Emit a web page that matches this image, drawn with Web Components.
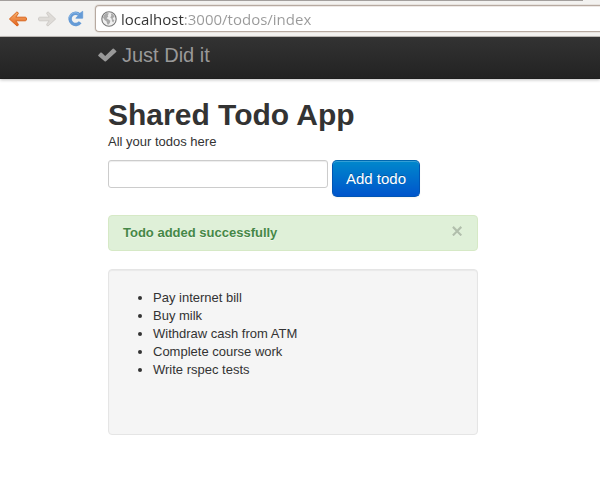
<!DOCTYPE html>
<html lang="en">
<head>
<meta charset="utf-8">
<title>Just Did it</title>
<style>
body { margin: 0; background: #fff; color: #333; font: 13px/18px "Liberation Sans", Arial, sans-serif; }
</style>
</head>
<body>
<browser-toolbar url="localhost:3000/todos/index"></browser-toolbar>
<site-nav>Just Did it</site-nav>
<todo-page>
  <page-heading slot="header">Shared Todo App<span slot="lead">All your todos here</span></page-heading>
  <todo-form slot="form">Add todo</todo-form>
  <flash-alert slot="alert">Todo added successfully</flash-alert>
  <todo-list></todo-list>
</todo-page>
<script>
function define(name, html, setup) {
  customElements.define(name, class extends HTMLElement {
    connectedCallback() {
      if (this.shadowRoot) return;
      const root = this.attachShadow({ mode: "open" });
      const template = document.createElement("template");
      template.innerHTML = html;
      root.append(template.content.cloneNode(true));
      if (setup) setup(this, root);
    }
  });
}

define("browser-toolbar", `
<style>
:host { display: block; background: #f3f2f0; border-bottom: 1px solid #c3bfbb; }
.edge { height: 1px; margin-right: 17px; background: #a39f9d; }
.bar { display: flex; align-items: center; height: 35px; }
.nav { display: flex; gap: 9px; padding-left: 8px; }
button { display: block; padding: 0; border: 0; background: none; width: 20px; height: 20px; }
svg { display: block; }
.address { flex: 1; display: flex; align-items: center; gap: 4px; box-sizing: border-box; height: 27px; margin: 0 0 0 9px; padding-left: 5px; background: #fff; border: 1px solid #b7aaa1; border-right: 0; border-radius: 4px 0 0 4px; box-shadow: inset 0 1px 0 #eee9e6, 0 0 0 1px #e7e3df; }
input { flex: 1; min-width: 0; margin: 0; padding: 0; border: 0; outline: 0; height: 22px; font: 15px/22px "Open Sans", "Noto Sans", sans-serif; color: #999; -webkit-text-fill-color: transparent; background: linear-gradient(90deg, #333 63px, #999 63px); -webkit-background-clip: text; background-clip: text; }
</style>
<div class="edge"></div>
<div class="bar">
  <div class="nav">
    <button aria-label="Back"><svg width="20" height="20" viewBox="0 0 20 20"><defs><linearGradient id="o" x2="0" y2="1"><stop stop-color="#f7b26f"/><stop offset="1" stop-color="#e3621c"/></linearGradient></defs><path d="M8.700 3.100Q10.300 3 10.300 4.500L7.800 8.200H17.300Q18.500 8.200 18.500 10T17.300 11.800H7.800L10.300 15.300Q10.500 16.900 8.900 16.900L1.400 10Z" fill="url(#o)" stroke="#d9661f" stroke-linejoin="round"/></svg></button>
    <button aria-label="Forward"><svg width="20" height="20" viewBox="0 0 20 20"><path d="M11.300 3.100Q9.700 3 9.700 4.500L12.200 8.200H2.700Q1.500 8.200 1.500 10T2.700 11.800H12.200L9.700 15.300Q9.500 16.900 11.100 16.900L18.600 10Z" fill="#dedbd7" stroke="#cfccc8" stroke-linejoin="round"/></svg></button>
    <button aria-label="Reload"><svg width="20" height="20" viewBox="0 0 20 20"><path d="M13.600 5.900A5.600 5.600 0 1 0 14.200 13.200" fill="none" stroke="#659bd6" stroke-width="3.400"/><path d="M16.700 2.300V9.200H9.800L12 6.800L14 4.300Z" fill="#659bd6" stroke="#659bd6" stroke-width=".8" stroke-linejoin="round"/><path d="M13 5.100A5.900 5.900 0 0 0 3.300 8.600" fill="none" stroke="#8db9e6" stroke-width="1"/></svg></button>
  </div>
  <div class="address">
    <svg width="16" height="16" viewBox="0 0 16 16" aria-hidden="true"><circle cx="8" cy="8" r="7.200" fill="#f0f0f0" stroke="#777" stroke-width="1.100"/><path d="M3 4L5.500 2L8 2.400L6.700 4.300L7.300 5.500L5.600 7.200L7.600 8.500L9.400 9.700L8.800 12L7 14L6 12.500L5.600 10.400L3.600 9L2 6.600ZM9.800 2.200L12.300 3.500L13.700 6L12.300 6.600L11.600 8.300L13.400 9L12.300 11.500L11 10.300L10.600 7.800L9.300 6.400L10.300 4.800Z" fill="#aaa"/></svg>
    <input type="text" aria-label="Address" spellcheck="false">
  </div>
</div>`, (host, root) => {
  root.querySelector("input").setAttribute("value", host.getAttribute("url"));
});

define("site-nav", `
<style>
:host { display: block; background: linear-gradient(#333, #222); box-shadow: 0 1px 3px rgba(0,0,0,.25), inset 0 -1px 0 rgba(0,0,0,.1); }
a { display: inline-flex; align-items: center; gap: 5px; height: 36px; padding: 0 20px 6px 98px; color: #999; font-size: 20px; line-height: 20px; text-decoration: none; }
svg { display: block; }
</style>
<a href="#"><svg width="19" height="14" viewBox="0 0 19 14" aria-hidden="true"><path d="M0.300 6.900L2.600 4.600Q3.200 4.200 3.800 4.700L7.200 8L14.700.700Q15.300.200 15.900.700L18.200 2.900Q18.700 3.500 18.200 4L8 13.300Q7.300 13.800 6.600 13.300L.400 8Q-.100 7.400.300 6.900Z" fill="#999"/></svg><span><slot></slot></span></a>`);

define("todo-page", `
<style>
:host { display: flex; flex-direction: column; gap: 18px; max-width: 370px; padding: 18px 20px 48px 108px; }
header { display: grid; gap: 9px; }
</style>
<header><slot name="header"></slot><slot name="form"></slot></header>
<slot name="alert"></slot>
<slot></slot>`);

define("page-heading", `
<style>
:host { display: block; }
h1 { margin: 0; font-size: 30px; line-height: 36px; }
p { margin: 0; }
</style>
<h1><slot></slot></h1><p><slot name="lead"></slot></p>`);

define("todo-form", `
<style>
:host { display: block; }
form { display: flex; align-items: flex-start; gap: 4px; margin: 0; }
input { box-sizing: border-box; width: 220px; height: 28px; margin: 0; padding: 4px; font: inherit; color: #555; background: #fff; border: 1px solid #ccc; border-radius: 3px; box-shadow: inset 0 1px 1px rgba(0,0,0,.075); }
button { margin: 0; padding: 8px 13px; font: 15px/19px "Liberation Sans", Arial, sans-serif; white-space: nowrap; color: #fff; text-shadow: 0 -1px 0 rgba(0,0,0,.25); background: linear-gradient(#08c, #05c); border: 1px solid #0055b3; border-top-color: #0067b0; border-radius: 5px; box-shadow: inset 0 1px 0 rgba(255,255,255,.2), 0 1px 2px rgba(0,0,0,.05); }
</style>
<form><input type="text" aria-label="New todo"><button type="button"><slot></slot></button></form>`);

define("flash-alert", `
<style>
:host { display: flex; justify-content: space-between; padding: 8px 14px; color: #468847; background: #dff0d8; border: 1px solid #d6e9c6; border-radius: 4px; text-shadow: 0 1px 0 rgba(255,255,255,.5); }
button { display: flex; align-items: flex-start; height: 18px; margin: 0; padding: 0; border: 0; background: none; font: bold 20px/14px "Liberation Sans", Arial, sans-serif; color: #000; opacity: .2; text-shadow: 0 1px 0 #fff; }
</style>
<strong><slot></slot></strong><button type="button" aria-label="Close">×</button>`,
(host, root) => root.querySelector("button").addEventListener("click", () => host.remove()));

define("todo-list", `
<style>
:host { display: block; padding: 19px 19px 55px; background: #f5f5f5; border: 1px solid #e5e5e5; border-radius: 4px; box-shadow: inset 0 1px 1px rgba(0,0,0,.05); }
ul { margin: 0; padding: 0 0 0 25px; }
</style>
<ul><li>Pay internet bill</li><li>Buy milk</li><li>Withdraw cash from ATM</li><li>Complete course work</li><li>Write rspec tests</li></ul>`);
</script>
</body>
</html>
